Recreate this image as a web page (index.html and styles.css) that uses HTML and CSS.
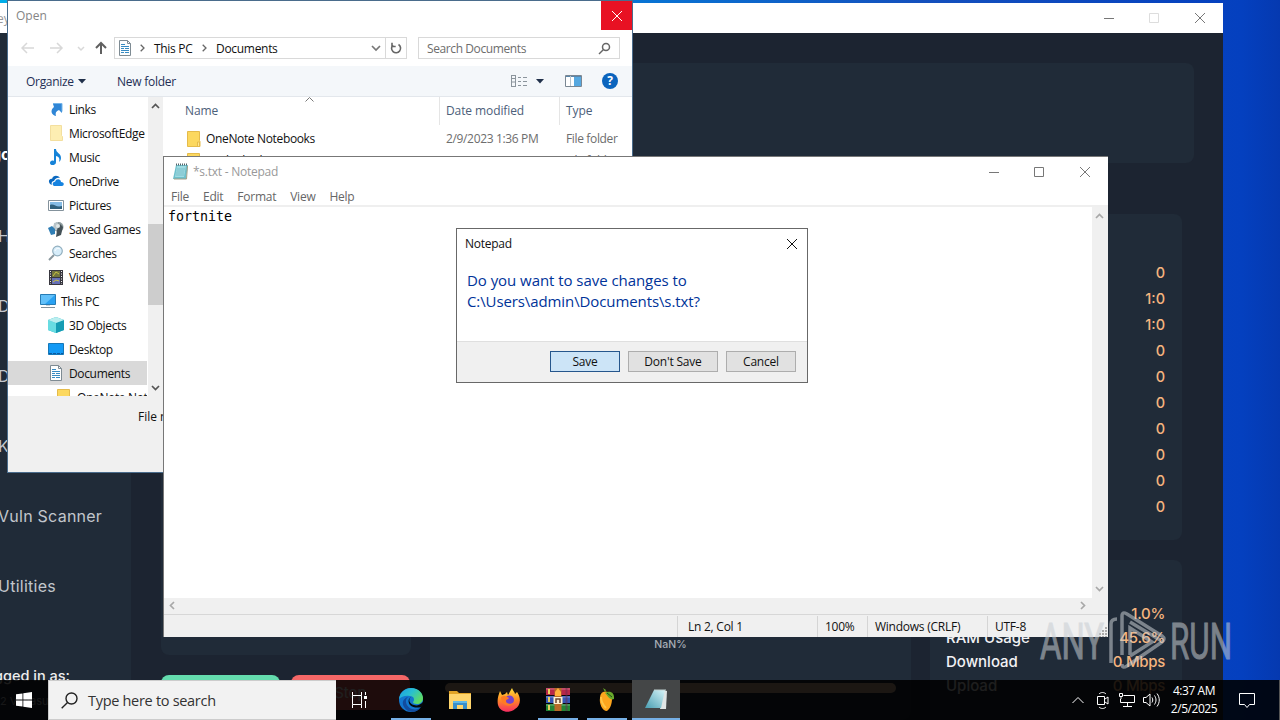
FILE: index.html
```
<!DOCTYPE html>
<html lang="en">

<head>
  <meta charset="utf-8">
  <meta name="viewport" content="width=device-width, initial-scale=1.0">
  <title>Desktop</title>
  <link rel="stylesheet" href="styles.css">
</head>

<body>
  <div id="desktop">

    <!-- app window in the back -->
    <div class="window" id="app">
      <div class="app_title">
        <span>ey</span>
        <svg class="win_buttons faded" width="120" height="14" viewBox="0 0 120 14"><path d="M9 7.5h10M100 2l10 10M110 2l-10 10"/><path class="off" d="M54.500 2.500h9v9h-9z"/></svg>
      </div>
      <div class="app_body">
        <div class="sidebar">
          <b class="brand">go</b>
          <ul>
            <li>H</li>
            <li>D</li>
            <li>D</li>
            <li>K</li>
            <li>Vuln Scanner</li>
            <li>Utilities</li>
          </ul>
          <p class="logged">gged in as:</p>
          <p class="user">2 Vegasus</p>
        </div>
        <div class="main">
          <div class="card banner"></div>
          <div class="columns">
            <div>
              <div class="card left_card"></div>
              <div class="actions">
                <div class="btn_start"></div>
                <div class="btn_stop">Stop</div>
              </div>
            </div>
            <div class="card mid_card">
              <span>NaN%</span>
              <div class="progress"></div>
            </div>
            <div>
              <div class="card counts">
                <p>0</p>
                <p>1:0</p>
                <p>1:0</p>
                <p>0</p>
                <p>0</p>
                <p>0</p>
                <p>0</p>
                <p>0</p>
                <p>0</p>
                <p>0</p>
              </div>
              <div class="card stats">
                <p><span>1.0%</span></p>
                <p><b>RAM Usage</b><span>45.6%</span></p>
                <p><b>Download</b><span>0 Mbps</span></p>
                <p><b>Upload</b><span>0 Mbps</span></p>
              </div>
            </div>
          </div>
        </div>
      </div>
    </div>

    <!-- open file dialog -->
    <div class="window" id="open">
      <div class="open_title">
        <span>Open</span>
        <div class="close_red"><svg width="12" height="12" viewBox="0 0 12 12"><path d="M1 1l10 10M11 1L1 11"/></svg></div>
      </div>
      <div class="nav_row">
        <svg class="arrows" width="94" height="16" viewBox="0 0 94 16">
          <path class="dim" d="M1 8h12M6 3L1 8l5 5M29 8h12M36 3l5 5-5 5"/>
          <path class="dim" d="M57 7l3 3 3-3"/>
          <path class="up" d="M80 14V3M75 8l5-5 5 5"/>
        </svg>
        <div class="address">
          <svg class="doc" width="14" height="16" viewBox="0 0 14 16"><use href="#i_doc"/></svg>
          <svg class="chev" width="5" height="8" viewBox="0 0 5 8"><path d="M.7.700L4 4 .7 7.300"/></svg>
          <span class="crumb1">This PC</span>
          <svg class="chev" width="5" height="8" viewBox="0 0 5 8"><path d="M.7.700L4 4 .7 7.300"/></svg>
          <span class="crumb2">Documents</span>
          <svg class="drop" width="10" height="7" viewBox="0 0 10 7"><path d="M1 1l4 4 4-4"/></svg>
          <div class="refresh"><svg width="12" height="12" viewBox="0 0 12 12"><path d="M8.500 2.500A4.500 4.500 0 1 1 3 3M2 .8v3.700h3.700"/></svg></div>
        </div>
        <div class="search">
          <span>Search Documents</span>
          <svg width="13" height="13" viewBox="0 0 13 13"><circle cx="8" cy="5" r="3.500"/><path d="M5.500 7.500L1 12"/></svg>
        </div>
      </div>
      <div class="toolbar">
        <span class="organize">Organize</span>
        <svg class="caret" width="8" height="5" viewBox="0 0 8 5"><path d="M0 0h8L4 4.500z"/></svg>
        <span class="newfolder">New folder</span>
        <svg class="view" width="18" height="14" viewBox="0 0 18 14"><path d="M1 1.500h5M1 12.500h5M1.500 1v12M5.500 1v12M2 4.500h3M2 8h3M8 3.500h3M13 3.500h4M8 7.500h3M13 7.500h4M8 11.500h3M13 11.500h4"/></svg>
        <svg class="caret" width="8" height="5" viewBox="0 0 8 5"><path d="M0 0h8L4 4.500z"/></svg>
        <svg class="pane" width="17" height="12" viewBox="0 0 17 12"><path d="M.5.500h16v11H.5z" fill="#fff" stroke="#7a8793"/><path d="M9 1h7v10H9z" fill="#56a8e0"/><path d="M1 1.500h15" stroke="#5a86aa"/><path d="M5.500 1v10" stroke="#b9c4cc"/></svg>
        <div class="help">?</div>
      </div>
      <div class="open_body">
        <div class="tree">
          <ul>
            <li><svg width="16" height="16" viewBox="0 0 16 16"><path d="M5 3h9v9l-3-3c-3 1-4 3-3 6-5-1-6-6-2-9z" fill="#2f86d6"/><path d="M5 2.500h9v8" fill="none" stroke="#75b5ea"/></svg>Links</li>
            <li><svg width="16" height="16" viewBox="0 0 16 16"><use href="#i_folder_pale"/></svg>MicrosoftEdge</li>
            <li><svg width="16" height="16" viewBox="0 0 16 16"><path d="M6 0h2c0 4 5 4 5 9 0 2-1 3-2 4 1-4 0-5-3-6v6c0 4-6 4-6 1 0-2 2-3 4-2z" fill="#1683d8"/></svg>Music</li>
            <li><svg width="16" height="16" viewBox="0 0 16 16"><path d="M2 11C-1 7 3 5 4 6c1-4 6-4 8-1-3-1-5 1-6 3-2 0-3 2-2 4z" fill="#0a68c0"/><path d="M6 13c-3-2 0-5 1-4 1-4 6-3 6 0 4 0 3 4 1 4z" fill="#1683e0"/></svg>OneDrive</li>
            <li><svg width="16" height="16" viewBox="0 0 16 16"><path d="M.5 3.500h15v10H.5z" fill="#fff" stroke="#84929c"/><path d="M2 5h12v7H2z" fill="#86bce5"/><path d="M2 8c4-2 6 3 12 1v3H2z" fill="#31617d"/></svg>Pictures</li>
            <li><svg width="16" height="16" viewBox="0 0 16 16"><circle cx="10.500" cy="6" r="5" fill="#8c9a9d"/><path d="M6 2l4-1-1 8-4 1z" fill="#b9c5c9"/><path d="M12 3l3 3-2 8-5 2 1-7z" fill="#455258"/><path d="M0 7l4-2 3 3v5l-4 1z" fill="#2f7eb5"/><circle cx="10" cy="5" r="2" fill="#e1e8e8"/></svg>Saved Games</li>
            <li><svg width="16" height="16" viewBox="0 0 16 16"><path d="M6 10l-5 5" stroke="#8a979e" stroke-width="2"/><circle cx="9.500" cy="6" r="4.800" fill="#d7edfa" stroke="#92afbf" stroke-width="1.200"/><path d="M7 6c1-3 3-3 5-2" fill="none" stroke="#fff"/></svg>Searches</li>
            <li><svg width="16" height="16" viewBox="0 0 16 16"><path d="M1 1h14v15H1z" fill="#38373f"/><path d="M4 2h8v6H4z" fill="#71743e"/><path d="M4 9h8v6H4z" fill="#6670b8"/><path d="M2.500 2v13M13.500 2v13" stroke="#eee" stroke-dasharray="1 1.500"/><path d="M5 7l3-4 3 2M5 13l3-2 3 1" fill="none" stroke="#c9c342"/></svg>Videos</li>
            <li class="pc"><svg width="16" height="16" viewBox="0 0 16 16"><path d="M.5 1.500h15v10H.5z" fill="#29a1f2" stroke="#277cb5"/><path d="M1 2h14L5 11H1z" fill="#62c0f9"/><path d="M1 14.500h14" stroke="#81909b"/><path d="M6 12.500h4" stroke="#c6d0d8"/></svg>This PC</li>
            <li><svg width="16" height="16" viewBox="0 0 16 16"><path d="M8 0l8 3v10l-8 3-8-3V3z" fill="#24b6c7"/><path d="M0 3l8 3v10l-8-3z" fill="#68dce2"/><path d="M8 6l8-3v10l-8 3z" fill="#169cb3"/><path d="M8 0l8 3-8 3-8-3z" fill="#bbeeef"/></svg>3D Objects</li>
            <li><svg width="16" height="16" viewBox="0 0 16 16"><path d="M.5 2.500h15v11H.5z" fill="#139af5" stroke="#1678b8"/><path d="M1 12.500h14" stroke="#0c5a9f" stroke-dasharray="3 1"/></svg>Desktop</li>
            <li class="selected"><svg width="16" height="16" viewBox="0 0 16 16"><use href="#i_doc" x="1"/></svg>Documents</li>
            <li class="deep"><svg width="16" height="16" viewBox="0 0 16 16"><use href="#i_folder"/></svg>OneNote Not</li>
          </ul>
          <div class="tree_scroll">
            <svg width="9" height="6" viewBox="0 0 9 6"><path d="M1 5l3.500-3.500L8 5"/></svg>
            <div class="thumb"></div>
            <svg width="9" height="6" viewBox="0 0 9 6"><path d="M1 1l3.500 3.500L8 1"/></svg>
          </div>
        </div>
        <div class="files">
          <svg class="sort" width="9" height="5" viewBox="0 0 9 5"><path d="M.5 4.500l4-4 4 4"/></svg>
          <div class="row head"><span>Name</span><span>Date modified</span><span>Type</span></div>
          <div class="row"><span><svg width="16" height="16" viewBox="0 0 16 16"><use href="#i_folder"/></svg>OneNote Notebooks</span><span>2/9/2023 1:36 PM</span><span>File folder</span></div>
          <div class="row second"><span><svg width="16" height="16" viewBox="0 0 16 16"><use href="#i_folder"/></svg>Outlook Files</span><span>7/18/2024 11:16 AM</span><span>File folder</span></div>
        </div>
      </div>
      <div class="open_foot">File name:</div>
    </div>

    <!-- notepad -->
    <div class="window" id="notepad">
      <div class="np_title">
        <svg width="17" height="17" viewBox="0 0 17 17"><use href="#i_notepad"/></svg>
        <span>*s.txt - Notepad</span>
        <svg class="win_buttons" width="120" height="14" viewBox="0 0 120 14"><path d="M9 7.500h10M54.500 2.500h9v9h-9zM100 2l10 10M110 2l-10 10"/></svg>
      </div>
      <div class="menu"><span>File</span><span>Edit</span><span>Format</span><span>View</span><span>Help</span></div>
      <div class="np_body">
        <div class="np_text">fortnite</div>
        <div class="np_vscroll">
          <svg width="9" height="6" viewBox="0 0 9 6"><path d="M1 5l3.500-3.500L8 5"/></svg>
          <svg width="9" height="6" viewBox="0 0 9 6"><path d="M1 1l3.500 3.500L8 1"/></svg>
        </div>
      </div>
      <div class="np_hscroll">
        <svg width="6" height="9" viewBox="0 0 6 9"><path d="M5 1L1.500 4.500 5 8"/></svg>
        <svg width="6" height="9" viewBox="0 0 6 9"><path d="M1 1l3.500 3.500L1 8"/></svg>
      </div>
      <div class="status">
        <span class="pos">Ln 2, Col 1</span>
        <span class="zoom">100%</span>
        <span class="eol">Windows (CRLF)</span>
        <span class="enc">UTF-8</span>
        <svg width="10" height="10" viewBox="0 0 10 10"><path d="M9 0v10M6 3v7M3 6v4" stroke="#aaa" stroke-width="2" stroke-dasharray="2 1"/></svg>
      </div>
    </div>

    <!-- save changes box -->
    <div class="window" id="confirm">
      <div class="cf_title"><span>Notepad</span><svg width="12" height="12" viewBox="0 0 12 12"><path d="M1 1l10 10M11 1L1 11"/></svg></div>
      <p><span class="line1">Do you want to save changes to</span><br><span class="line2">C:\Users\admin\Documents\s.txt?</span></p>
      <div class="buttons">
        <button class="primary">Save</button>
        <button class="wide">Don't Save</button>
        <button>Cancel</button>
      </div>
    </div>

    <div id="taskbar">
      <svg class="start" width="16" height="16" viewBox="0 0 16 16"><path d="M0 2.300l6.500-.9v6.200H0zM7.300 1.300L16 0v7.600H7.300zM0 8.400h6.500v6.200L0 13.700zM7.300 8.400H16V16l-8.700-1.300z"/></svg>
      <div class="tb_search">
        <svg width="17" height="17" viewBox="0 0 17 17"><circle cx="10.500" cy="6.500" r="5.500"/><path d="M6.500 10.500L.7 16.300"/></svg>
        <span>Type here to search</span>
      </div>
      <svg class="taskview" width="17" height="16" viewBox="0 0 17 16"><path d="M1.500 0v3.500h9V0M1.500 16v-3.500h9V16M1.500 3.500v9M10.500 3.500v9M14.500 0v3M14.500 9v7"/><path d="M13 4h3v3h-3z" fill="#fff" stroke="none"/></svg>
      <div class="tasks">
        <div class="task open"><svg width="24" height="24" viewBox="0 0 24 24">
          <defs>
            <linearGradient id="g_edge" x1="0" x2="1" y1="0" y2=".6"><stop offset="0" stop-color="#1c9de4"/><stop offset=".5" stop-color="#28bfd1"/><stop offset="1" stop-color="#5fdc62"/></linearGradient>
          </defs>
          <circle cx="12" cy="12" r="12" fill="#1377cf"/>
          <path d="M0 11C1 4 6 0 12 0c8 0 12 6 12 10 0 4-3 6-6 6-3 0-4-1-4-2 2-2 1-6-3-6-5-1-9 1-11 3z" fill="url(#g_edge)"/>
          <path d="M9 9c-4 3-2 10 4 12 4 1 7 0 9-2-3 6-13 7-17 0-3-5 0-9 4-10z" fill="#124c9e"/>
          <path d="M12 9c-3 2-2 7 3 8 3 1 6 0 9-3v4l-2 1c-3 1-8 1-11-2-2-3-2-6 1-8z" fill="#05080b"/>
        </svg></div>
        <div class="task"><svg width="24" height="24" viewBox="0 0 24 24"><path d="M1 3h8l2 2h12v4H1z" fill="#e2a426"/><path d="M1 6h22v15H1z" fill="#ffd56c"/><path d="M5 21v-8h14v8h-4v-4H9v4z" fill="#398fca"/><path d="M5 13h14v2H5z" fill="#60b9e8"/></svg></div>
        <div class="task"><svg width="24" height="24" viewBox="0 0 24 24">
          <defs>
            <linearGradient id="g_fox" x1="0" x2="0" y1="0" y2="1"><stop offset="0" stop-color="#ffdf3c"/><stop offset=".5" stop-color="#ff8a25"/><stop offset="1" stop-color="#f72c62"/></linearGradient>
          </defs>
          <path d="M3 3l2 4 3-1 2-2 1 3 4-7c1 3 3 4 3 6l2-2c5 7 3 14-2 17-6 5-15 3-17-4C0 12 1 8 3 3z" fill="url(#g_fox)"/>
          <circle cx="12.500" cy="12" r="4.500" fill="#7542cc"/><path d="M4 9c3-2 5-1 8 1-1 2-3 1-3 3 0 3 5 4 8 1-2 6-13 5-13-5z" fill="#ff7b23"/>
        </svg></div>
        <div class="task open"><svg width="24" height="24" viewBox="0 0 24 24"><path d="M0 0h24v7H0z" fill="#b72748"/><path d="M0 8h24v7H0z" fill="#3556b5"/><path d="M0 16h24v7H0z" fill="#218536"/><path d="M0 1h24M0 9h24M0 17h24" stroke="#fff" opacity=".35"/><path d="M8.500 0h7v23h-7z" fill="#b86a28"/><path d="M9 4l3-4 3 4v4H9z" fill="#ffb13b"/><path d="M3 1v5M3 9v5M3 17v5" stroke="#ead061" stroke-width="2"/><path d="M7.500 9h9v7h-9z" fill="#fff0d0"/><path d="M10 15v-4h4v4" fill="none" stroke="#6c4630" stroke-width="1.500"/><path d="M20.500 0v23" stroke="#6c2850" stroke-width="2" opacity=".5"/></svg></div>
        <div class="task open"><svg width="24" height="24" viewBox="0 0 24 24"><path d="M8 4c4-2 9 1 9 7 0 5-2 10-5 12-5 0-8-8-7-13 0-3 1-5 3-6z" fill="#fda51d"/><path d="M6 9c0 5 3 9 5 11" fill="none" stroke="#ffc546" stroke-width="2"/><path d="M10 5c4-3 10-1 9 6-4 2-6-3-9-6zM10 4L8 0l3 2z" fill="#68a92c"/><path d="M12 5l5 4" stroke="#244d19"/></svg></div>
        <div class="task open active"><svg width="24" height="24" viewBox="0 0 24 24">
          <defs>
            <linearGradient id="g_note" x1="1" x2="0" y1="0" y2="1"><stop offset="0" stop-color="#d7f4f8"/><stop offset="1" stop-color="#489eb2"/></linearGradient>
          </defs>
          <path d="M19 2l4 1-1 18h-6z" fill="#e0e5e5"/><path d="M10 2h11l-4 18H1z" fill="url(#g_note)"/><path d="M10 2h12" stroke="#bfcfcf"/>
        </svg></div>
      </div>
      <svg class="tray" width="90" height="18" viewBox="0 0 90 18">
        <path d="M1.500 12L7 6.500l5.500 5.500"/>
        <path d="M26.500 5.500h7v8h-7zM34 8l3-2v7l-3-2M28 3c2-2 5-2 7 0M28 16c2 2 5 2 7 0"/>
        <path d="M52.500 4.500h11v7H49.500V8M56.500 12v3M52 15.500h9M48.500 2.500h3v3h-3zM50 6v2"/>
        <path d="M72.500 6.500h2.500l4-3.500v12l-4-3.500h-2.500zM81 6.500c1 2 1 3 0 5M83.500 4.500c2 3 2 6 0 9M86 2.500c3 4 3 9 0 13"/>
      </svg>
      <div class="clock"><span>4:37 AM</span><span>2/5/2025</span></div>
      <svg class="notice" width="16" height="17" viewBox="0 0 16 17"><path d="M.5 1.500h15v11h-5l-2.500 3-2.500-3h-5z"/></svg>
      <div class="peek"></div>
    </div>

    <svg id="watermark" width="200" height="64" viewBox="0 0 200 64">
      <text x="4" y="51" textLength="64" lengthAdjust="spacingAndGlyphs">ANY</text>
      <text x="134" y="51" textLength="62" lengthAdjust="spacingAndGlyphs">RUN</text>
      <path d="M75 55V16q0-5 6-5M86 47V8q0-5 5-2l35 22q4 3 0 6L91 58q-5 3-5-2M94 47V20l22 14-22 14M94 14l30 18"/>
    </svg>
  </div>

  <!-- shared icons -->
  <svg width="0" height="0" class="defs">
    <symbol id="i_doc" viewBox="0 0 14 16" width="14" height="16"><path d="M1.500.500h8l3 3v12h-11z" fill="#fdfefe" stroke="#7e8b93"/><path d="M9.500.500v3h3" fill="none" stroke="#7e8b93"/><path d="M3 4.500h4M3 6.500h8M3 8.500h3M7 8.500h4M3 10.500h8M3 12.500h3M7 12.500h4" stroke="#388bc2"/></symbol>
    <symbol id="i_folder" viewBox="0 0 16 16" width="16" height="16"><path d="M1.500.500h12v9l.5 1v5H1.500z" fill="#fcd85f" stroke="#e5bb4b"/><path d="M11.500 15v-4h2v4" fill="#ffe791" stroke="#e5bb4b"/></symbol>
    <symbol id="i_folder_pale" viewBox="0 0 16 16" width="16" height="16"><path d="M2.500.500h11v10l1 1v4h-12z" fill="#fdeeb2" stroke="#f3df9f"/></symbol>
    <symbol id="i_notepad" viewBox="0 0 17 17" width="17" height="17"><path d="M4 2h12l-2 14H1z" fill="#6ebfcb"/><path d="M5 3h9l-2 11H3z" fill="#9edce3"/><path d="M4 1.500h12" stroke="#53656b" stroke-width="2" stroke-dasharray="1 1"/><path d="M15.500 3l-1 13H2" fill="none" stroke="#a59e85"/><path d="M5 6h8M4.500 8h8M4 10h8M4 12h8" stroke="#67abb8" stroke-width=".6"/></symbol>
  </svg>
</body>

</html>
```
FILE: styles.css
```
* {
  box-sizing: border-box;
}

body {
  margin: 0;
  padding: 0;
  overflow: hidden;
  font-family: "Open Sans", "Noto Sans", sans-serif;
  font-size: 12px;
  letter-spacing: -0.25px;
  color: #111;
}

ul,
p {
  margin: 0;
  padding: 0;
  list-style-type: none;
}

svg {
  display: block;
  flex: none;
  fill: none;
}

.defs {
  position: absolute;
}

#desktop {
  position: relative;
  width: 1280px;
  height: 720px;
  overflow: hidden;
  background: linear-gradient(90deg, #00aeea 0, #0874d4 50%, #1450bd 72%, #0440bf 97%, #0539b0 100%);
}

.window {
  position: absolute;
  overflow: hidden;
  white-space: nowrap;
}

.win_buttons {
  margin-left: auto;
  stroke: #777;
}

.win_buttons .off {
  stroke: #ddd;
}

/* app */
#app {
  left: 0;
  top: 3px;
  width: 1223px;
  height: 717px;
  background: #1c2431;
  font-family: Inter, sans-serif;
  letter-spacing: 0;
}

.app_title {
  display: flex;
  align-items: center;
  height: 30px;
  padding-right: 8px;
  background: #fff;
  color: #999;
  font-family: "Open Sans", sans-serif;
}

.app_title span {
  margin-left: -3px;
}

.app_body {
  display: flex;
  height: 687px;
}

.sidebar {
  width: 131px;
  background: #202b38;
  color: #c2c6cc;
  font-size: 16px;
  overflow: hidden;
}

.brand {
  display: block;
  margin: 110px 0 0 -9px;
  height: 24px;
  line-height: 22px;
  color: #fff;
}

.sidebar ul {
  margin: 34px 0 0 -2px;
}

.sidebar li {
  height: 70px;
  line-height: 70px;
  letter-spacing: 0.25px;
}

.logged {
  margin-top: 41px;
  line-height: 28px;
  font-size: 14.5px;
  font-weight: 500;
  color: #eee;
  margin-left: -6px;
}

.user {
  margin-top: 4px;
  font-size: 11px;
  color: #b8bcc2;
}

.main {
  flex: 1;
  padding: 30px 0 0 30px;
}

.card {
  background: #202b38;
  border-radius: 8px;
}

.banner {
  width: 1033px;
  height: 100px;
  margin-bottom: 51px;
}

.columns {
  display: grid;
  grid-template-columns: 250px 481px 252px;
  column-gap: 19px;
}

.left_card {
  height: 441px;
}

.actions {
  display: flex;
  gap: 11px;
  margin-top: 20px;
}

.actions div {
  width: 119px;
  height: 35px;
  border-radius: 8px;
  font-size: 15px;
  line-height: 35px;
  text-align: center;
}

.btn_start {
  background: #64dcae;
}

.actions .btn_stop {
  background: #f56767;
  color: #fff;
}

.mid_card {
  display: flex;
  flex-direction: column;
  align-items: center;
  height: 506px;
  padding-top: 424px;
  font-size: 10.5px;
  font-weight: 500;
  color: #a9afb7;
}

.progress {
  width: 451px;
  height: 10px;
  margin-top: 32px;
  border-radius: 5px;
  background: #e1bd9b;
}

.counts {
  height: 326px;
  padding: 46px 17px 0 0;
  text-align: right;
  color: #f5b57f;
  font-size: 14.5px;
  font-weight: 500;
}

.counts p {
  height: 26px;
  line-height: 26px;
}

.stats {
  height: 170px;
  margin-top: 20px;
  padding: 42px 17px 0 16px;
  font-size: 15px;
}

.stats p {
  display: flex;
  justify-content: space-between;
  height: 24px;
  line-height: 24px;
}

.stats b {
  font-weight: 500;
  color: #f2f2f4;
}

.stats span {
  margin-left: auto;
  color: #f5b57f;
  font-weight: 500;
  letter-spacing: -0.3px;
}

/* open dialog */
#open {
  left: 7px;
  top: 0;
  width: 626px;
  height: 473px;
  border: 1px solid #4a6c8c;
  border-right-width: 1px;
  background: #fff;
}

.open_title {
  display: flex;
  justify-content: space-between;
  height: 29px;
  padding-left: 8px;
  line-height: 29px;
  color: #858585;
  letter-spacing: 0;
}

.close_red {
  display: flex;
  align-items: center;
  justify-content: center;
  width: 31px;
  height: 29px;
  background: #e81123;
}

.close_red svg {
  stroke: #fff;
}

.nav_row {
  display: flex;
  align-items: center;
  height: 36px;
  padding-left: 13px;
}

.arrows {
  stroke: #606060;
  stroke-width: 2;
}

.arrows .dim {
  stroke: #d8d8d8;
  stroke-width: 1.5;
}

.address {
  display: flex;
  align-items: center;
  width: 293px;
  height: 22px;
  margin-left: -1px;
  padding-left: 3px;
  border: 1px solid #d9d9d9;
}

.chev {
  margin-left: 8px;
  stroke: #666;
  stroke-width: 1.3;
}

.crumb1 {
  margin-left: 9px;
  width: 40px;
  letter-spacing: -0.3px;
}

.crumb2 {
  margin-left: 9px;
  letter-spacing: -0.3px;
}

.drop {
  margin-left: auto;
  stroke: #777;
  stroke-width: 1.7;
}

.refresh {
  display: flex;
  align-items: center;
  justify-content: center;
  width: 21px;
  height: 20px;
  margin-left: 4px;
  border-left: 1px solid #d9d9d9;
}

.refresh svg {
  stroke: #666;
  stroke-width: 1.6;
}

.search {
  display: flex;
  align-items: center;
  justify-content: space-between;
  width: 202px;
  height: 22px;
  margin-left: 11px;
  padding: 0 8px;
  border: 1px solid #d9d9d9;
  color: #6d6d6d;
  letter-spacing: -0.4px;
}

.search svg {
  stroke: #666;
  stroke-width: 1.5;
}

.toolbar {
  display: flex;
  align-items: center;
  height: 31px;
  padding-left: 18px;
  border-bottom: 1px solid #e3e7ec;
  background: #f4f7fa;
  color: #1f2f55;
}

.organize {
  width: 52px;
  letter-spacing: -0.35px;
}

.toolbar .organize {
  letter-spacing: -0.3px;
}

.caret path {
  fill: #20304a;
}

.newfolder {
  width: 424px;
  padding-left: 31px;
}

.view {
  margin-right: 8px;
  stroke: #8b949c;
}

.pane {
  margin-left: 21px;
}

.help {
  width: 16px;
  height: 16px;
  margin-left: 20px;
  border-radius: 50%;
  background: #0b64bd;
  color: #fff;
  font-weight: bold;
  line-height: 16px;
  text-align: center;
}

.open_body {
  display: flex;
  height: 299px;
}

.tree {
  display: flex;
  width: 155px;
  overflow: hidden;
}

.tree ul {
  width: 139px;
  overflow: hidden;
}

.tree li {
  display: flex;
  align-items: center;
  height: 24px;
  padding-left: 40px;
  letter-spacing: -0.35px;
}

.tree li svg {
  margin-right: 5px;
}

.tree li.pc {
  padding-left: 32px;
}

.tree li.selected {
  background: #d9d9d9;
}

.tree li.deep {
  padding-left: 48px;
}

.tree_scroll {
  display: flex;
  flex-direction: column;
  align-items: center;
  width: 15px;
  margin-left: 1px;
  padding: 6px 0 5px;
  background: #f0f0f0;
}

.tree_scroll svg {
  stroke: #555;
  stroke-width: 1.7;
}

.thumb {
  width: 15px;
  height: 81px;
  margin: 115px 0 auto;
  background: #cdcdcd;
}

.files {
  position: relative;
  flex: 1;
}

.sort {
  position: absolute;
  left: 142px;
  top: 0;
  stroke: #777;
}

.row {
  display: grid;
  grid-template-columns: 276px 120px 1fr;
  height: 28px;
  line-height: 28px;
  color: #6d6d6d;
  letter-spacing: -0.35px;
}

.row span {
  display: flex;
  align-items: center;
  padding-left: 7px;
}

.row span:first-child {
  padding-left: 23px;
  color: #111;
}

.row svg {
  margin-right: 4px;
}

.row.head {
  height: 26px;
  margin-bottom: 2px;
  letter-spacing: -0.1px;
}

.row.head span,
.row.head span:first-child {
  padding-left: 6px;
  color: #4c607a;
}

.row.head span:first-child {
  padding-left: 22px;
}

.row.head span + span {
  border-left: 1px solid #e5e5e5;
}

.row.second {
  height: 14px;
  line-height: 14px;
}

.open_foot {
  height: 76px;
  padding: 12px 0 0 130px;
  background: #f0f0f0;
  letter-spacing: 0;
}

/* notepad */
#notepad {
  left: 163px;
  top: 156px;
  width: 945px;
  height: 481px;
  border: 1px solid #777;
  border-right: 0;
  border-bottom: 0;
  background: #fff;
}

.np_title {
  display: flex;
  align-items: center;
  height: 29px;
  padding: 0 8px;
  color: #999;
}

.np_title span {
  margin-left: 4px;
}

.menu {
  display: flex;
  gap: 14px;
  height: 21px;
  padding-left: 7px;
  border-bottom: 2px solid #efefef;
  line-height: 21px;
  color: #666;
}

.np_body {
  display: flex;
  height: 391px;
}

.np_text {
  flex: 1;
  padding: 2px 4px;
  font-family: "DejaVu Sans Mono", monospace;
  font-size: 13.3px;
  letter-spacing: 0;
  color: #000;
}

.np_vscroll,
.np_hscroll {
  display: flex;
  align-items: center;
  justify-content: space-between;
  background: #f0f0f0;
}

.np_vscroll {
  flex-direction: column;
  width: 16px;
  padding: 6px 1px 6px 0;
}

.np_hscroll {
  height: 16px;
  padding: 0 22px 2px 5px;
}

.np_vscroll svg,
.np_hscroll svg {
  stroke: #a8a8a8;
  stroke-width: 1.7;
}

.status {
  display: flex;
  align-items: stretch;
  height: 24px;
  padding-left: 513px;
  border-top: 1px solid #d7d7d7;
  background: #f0f0f0;
}

.status span {
  margin-top: 1px;
  line-height: 22px;
  border-left: 1px solid #d5d5d5;
}

.status .pos {
  width: 140px;
  padding-left: 10px;
}

.status .zoom {
  width: 50px;
  padding-left: 7px;
}

.status .eol {
  width: 120px;
  padding-left: 7px;
}

.status .enc {
  width: 110px;
  padding-left: 7px;
}

.status svg {
  margin-top: 12px;
}

/* save changes box */
#confirm {
  left: 456px;
  top: 228px;
  width: 352px;
  height: 155px;
  border: 1px solid #686868;
  background: #fff;
}

.cf_title {
  display: flex;
  align-items: center;
  justify-content: space-between;
  height: 29px;
  padding: 0 9px 0 8px;
}

.cf_title svg {
  stroke: #111;
}

#confirm p {
  height: 83px;
  padding: 12px 10px 0;
  font-size: 15px;
  line-height: 21px;
  letter-spacing: -0.05px;
  color: #003399;
}

.line2 {
  letter-spacing: -0.1px;
}

.buttons {
  display: flex;
  justify-content: flex-end;
  gap: 8px;
  height: 41px;
  padding: 9px 11px;
  border-top: 1px solid #dfdfdf;
  background: #f0f0f0;
}

.buttons button {
  width: 70px;
  height: 21px;
  padding: 0;
  border: 1px solid #adadad;
  background: #e1e1e1;
  font: 12px "Open Sans", sans-serif;
  letter-spacing: -0.2px;
  color: #111;
}

.buttons .wide {
  width: 90px;
}

.buttons .primary {
  border-color: #26568c;
  background: #cce4f7;
}

/* taskbar */
#taskbar {
  position: absolute;
  left: 0;
  bottom: 0;
  display: flex;
  align-items: center;
  width: 1280px;
  height: 40px;
  background: rgba(0, 0, 0, 0.88);
  color: #fff;
}

.start {
  margin: 0 16px;
}

.start path {
  fill: #fff;
}

.tb_search {
  display: flex;
  align-items: center;
  gap: 10px;
  width: 288px;
  height: 40px;
  padding-left: 12px;
  border: 1px solid #ccc;
  border-right: 0;
  background: #f2f2f2;
  font-size: 14.5px;
  letter-spacing: -0.5px;
  color: #333;
}

.tb_search svg {
  stroke: #222;
  stroke-width: 1.4;
}

.tb_search span {
  letter-spacing: -0.3px;
}

.taskview {
  margin-left: 15px;
  stroke: #fff;
}

.tasks {
  display: flex;
  gap: 1px;
  margin-left: 19px;
}

.task {
  display: flex;
  align-items: center;
  justify-content: center;
  width: 48px;
  height: 40px;
}

.task.open {
  background: linear-gradient(#76b0e6, #76b0e6) center bottom / 40px 2px no-repeat;
}

.task.active {
  background: linear-gradient(#76b0e6, #76b0e6) center bottom / 48px 2px no-repeat #444647;
}

.tray {
  margin-left: auto;
  stroke: #fff;
}

.clock {
  display: flex;
  flex-direction: column;
  align-items: center;
  width: 46px;
  margin-left: 10px;
  line-height: 18px;
  white-space: nowrap;
  letter-spacing: -0.45px;
}

.notice {
  margin: 0 24px 0 22px;
  stroke: #fff;
}

.peek {
  width: 1px;
  height: 40px;
  background: #555;
}

#watermark {
  position: absolute;
  left: 1036px;
  top: 608px;
  opacity: 0.55;
}

#watermark text {
  fill: #c8cdd2;
  stroke: #c8cdd2;
  stroke-width: 1;
  font: 50px Roboto, sans-serif;
  letter-spacing: 0;
}

#watermark path {
  stroke: #c8cdd2;
  stroke-width: 3.5;
}
```
